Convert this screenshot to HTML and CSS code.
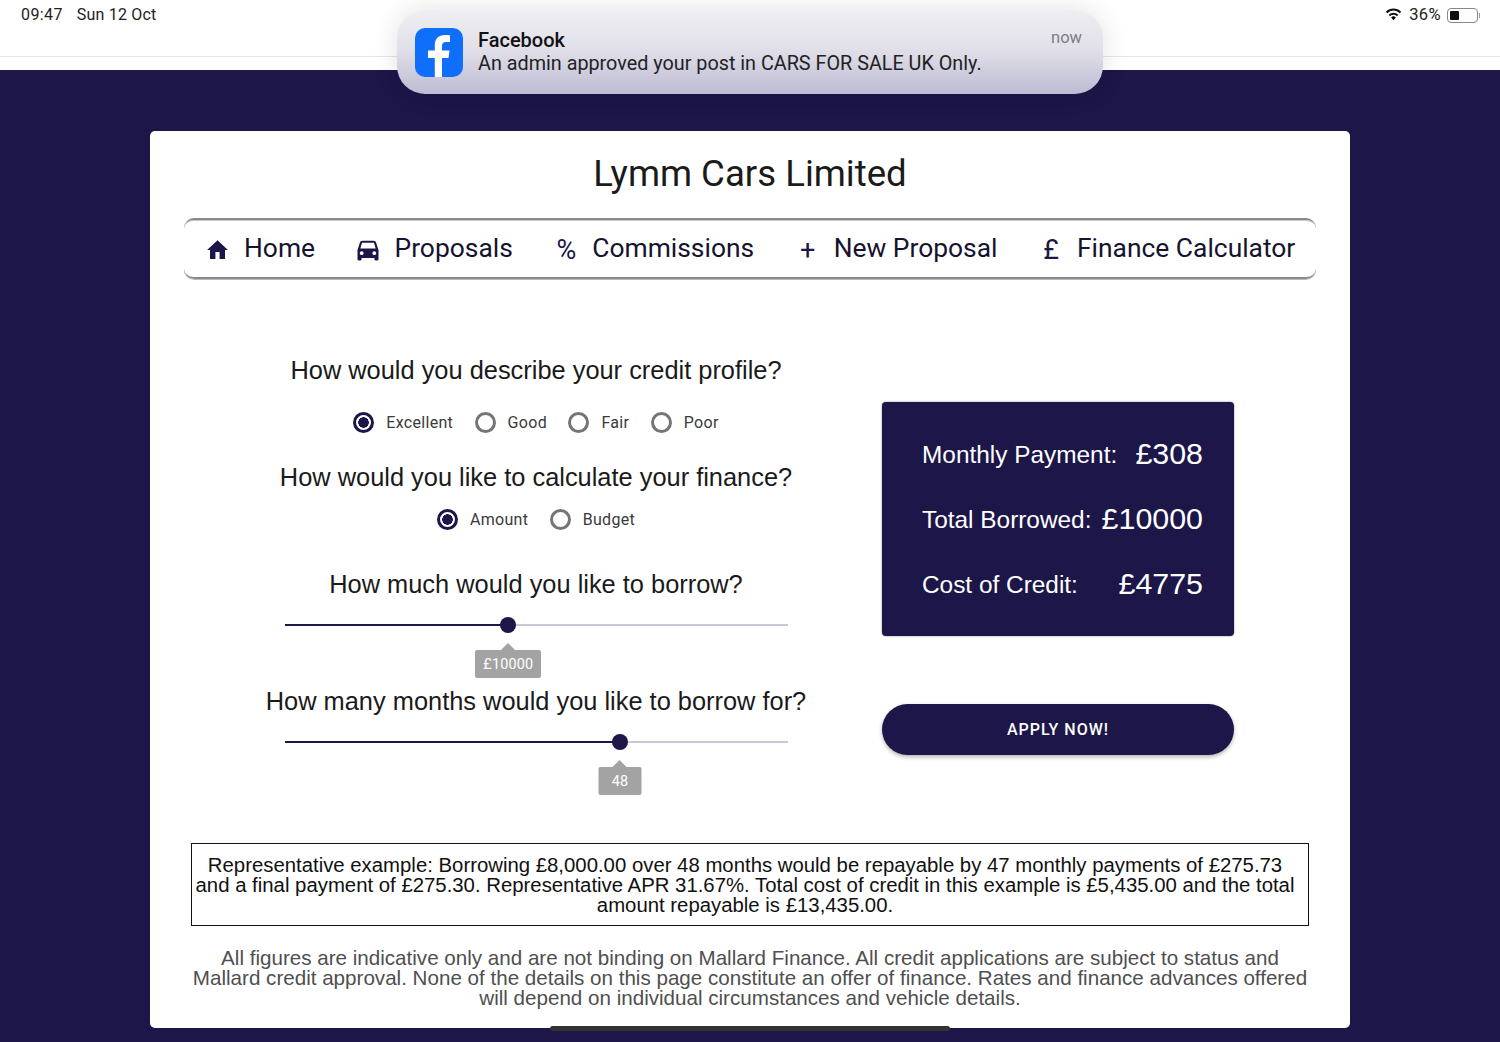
FILE: index.html
```html
<!DOCTYPE html>
<html lang="en">
<head>
    <meta charset="UTF-8">
    <meta name="viewport" content="width=device-width, initial-scale=1.0">
    <title>Finance Calculator</title>
    <link rel="stylesheet" href="styles.css">
</head>
<body>
    <!-- Tablet status bar -->
    <div class="status-bar">
        <div class="status-time">09:47<span class="status-date">Sun 12 Oct</span></div>
        <div class="status-right">
            <svg class="wifi-icon" viewBox="0 0 18 14" width="17" height="13">
                <path class="wifi-arc" d="M1.500 4.800A10.600 10.600 0 0 1 16.500 4.800"/>
                <path class="wifi-arc" d="M4.600 8A6.200 6.200 0 0 1 13.400 8"/>
                <path d="M6.500 10.300L9 13.200l2.500-2.900a3.400 3.400 0 0 0-5 0z"/>
            </svg>
            <span class="status-battery-text">36%</span>
            <div class="battery"><div class="battery-level"></div></div>
            <div class="battery-tip"></div>
        </div>
    </div>

    <!-- Notification banner -->
    <div class="notification">
        <svg class="fb-icon" viewBox="0 0 48 49" width="48" height="49">
            <rect width="48" height="49" rx="10" fill="#0f6ffa"/>
            <path d="M27 49V30h6.500l1-7.500H27v-4.700c0-2.200 1-3.800 4-3.800h4V7.300c-1.500-.2-3.300-.4-5.200-.4-5.800 0-10 3.500-10 10v5.600H13V30h6.800v19z" fill="#fff"/>
        </svg>
        <div class="notification-text">
            <div class="notification-title">Facebook</div>
            <div class="notification-body">An admin approved your post in CARS FOR SALE UK Only.</div>
        </div>
        <div class="notification-time">now</div>
    </div>

    <div class="card">
        <h1>Lymm Cars Limited</h1>

        <nav class="main-nav">
            <a class="nav-item">
                <svg class="nav-icon nav-icon-home" viewBox="0 0 24 24" width="25" height="25"><path d="M10 21v-6.500h4V21h5.200v-8.500H22L12 3 2 12.500h2.800V21z"/></svg>
                Home
            </a>
            <a class="nav-item">
                <svg class="nav-icon nav-icon-car" viewBox="0 0 24 24" width="28" height="28"><path d="M18.900 5.500c-.3-.9-1-1.500-2-1.500H7.100c-1 0-1.700.6-2 1.500L3 12v8c0 .6.400 1 1 1h1.500c.6 0 1-.4 1-1v-1.200h11V20c0 .6.400 1 1 1H20c.6 0 1-.4 1-1v-8zM6.600 16.300c-.9 0-1.600-.7-1.600-1.600s.7-1.600 1.600-1.600 1.600.7 1.600 1.600-.7 1.600-1.600 1.600zm10.800 0c-.9 0-1.600-.7-1.600-1.600s.7-1.600 1.600-1.600 1.600.7 1.600 1.600-.7 1.600-1.600 1.600zM5.400 10.800l1.500-5h10.200l1.500 5z"/></svg>
                Proposals
            </a>
            <a class="nav-item"><span class="nav-glyph">%</span>Commissions</a>
            <a class="nav-item"><span class="nav-glyph">+</span>New Proposal</a>
            <a class="nav-item"><span class="nav-glyph">£</span>Finance Calculator</a>
        </nav>

        <div class="calculator">
            <div class="questions">
                <div class="question">How would you describe your credit profile?</div>
                <div class="radio-row radio-row-first">
                    <label><input type="radio" name="credit" checked>Excellent</label>
                    <label><input type="radio" name="credit">Good</label>
                    <label><input type="radio" name="credit">Fair</label>
                    <label><input type="radio" name="credit">Poor</label>
                </div>

                <div class="question question-second">How would you like to calculate your finance?</div>
                <div class="radio-row radio-row-second">
                    <label><input type="radio" name="mode" checked>Amount</label>
                    <label><input type="radio" name="mode">Budget</label>
                </div>

                <div class="question question-third">How much would you like to borrow?</div>
                <div class="slider">
                    <div class="slider-fill" style="width: 44.4%">
                        <div class="slider-thumb"></div>
                        <div class="slider-tip">£10000</div>
                    </div>
                </div>

                <div class="question question-fourth">How many months would you like to borrow for?</div>
                <div class="slider">
                    <div class="slider-fill" style="width: 66.6%">
                        <div class="slider-thumb"></div>
                        <div class="slider-tip">48</div>
                    </div>
                </div>
            </div>

            <div class="summary">
                <div class="summary-panel">
                    <div class="summary-row"><span>Monthly Payment:</span><span class="summary-value">£308</span></div>
                    <div class="summary-row"><span>Total Borrowed:</span><span class="summary-value">£10000</span></div>
                    <div class="summary-row"><span>Cost of Credit:</span><span class="summary-value">£4775</span></div>
                </div>
                <button class="apply-button" type="button">Apply Now!</button>
            </div>
        </div>

        <div class="example-box">Representative example: Borrowing £8,000.00 over 48 months would be repayable by 47 monthly payments of £275.73 and a final payment of £275.30. Representative APR 31.67%. Total cost of credit in this example is £5,435.00 and the total amount repayable is £13,435.00.</div>

        <p class="disclaimer">All figures are indicative only and are not binding on Mallard Finance. All credit applications are subject to status and Mallard credit approval. None of the details on this page constitute an offer of finance. Rates and finance advances offered will depend on individual circumstances and vehicle details.</p>
    </div>

    <div class="home-bar"></div>
</body>
</html>
```

FILE: styles.css
```css
/* Reset some default browser styles */
* {
    margin: 0;
    padding: 0;
    box-sizing: border-box;
}

body {
    height: 1042px;
    overflow: hidden;
    background-color: #1c1649;
    font-family: 'Liberation Sans', Arial, sans-serif;
    color: #111;
}

/* Status bar */
.status-bar {
    display: flex;
    justify-content: space-between;
    height: 70px;
    padding: 6px 20px 0 21px;
    background: linear-gradient(#fff 56px, #e6e6e6 56px, #e6e6e6 57px, #fff 57px);
    font-family: 'Roboto', sans-serif;
    font-size: 16px;
    line-height: 18px;
    letter-spacing: 0.4px;
    color: #222;
}

.status-date {
    margin-left: 14px;
    letter-spacing: 0.2px;
}

.status-right {
    display: flex;
    align-items: flex-start;
}

.status-battery-text {
    font-size: 16.500px;
}

.wifi-icon {
    margin: 2px 7px 0 0;
}

.wifi-arc {
    fill: none;
    stroke: #111;
    stroke-width: 2.200;
}

.battery {
    width: 31px;
    height: 15px;
    margin: 2px 0 0 6px;
    padding: 2px;
    border: 1px solid #888;
    border-radius: 4px;
}

.battery-level {
    width: 9px;
    height: 9px;
    border-radius: 1px;
    background-color: #111;
}

.battery-tip {
    width: 1px;
    height: 5px;
    margin: 7px 0 0 1px;
    background-color: #999;
}

/* Notification banner */
.notification {
    position: absolute;
    top: 10px;
    left: 397px;
    display: flex;
    align-items: flex-start;
    width: 706px;
    height: 84px;
    padding: 18px 21px 0 18px;
    border-radius: 28px;
    background: linear-gradient(#efeef2, #e2e1ea 45%, #bdbbd3);
    box-shadow: 0 0 26px rgba(0, 0, 0, 0.12);
    font-family: 'Roboto', sans-serif;
}

.fb-icon {
    flex-shrink: 0;
}

.notification-text {
    flex: 1;
    margin-left: 15px;
    padding-top: 1px;
    font-size: 20px;
    line-height: 23px;
    color: #222;
}

.notification-title {
    font-weight: 500;
    color: #111;
}

.notification-body {
    font-size: 19.800px;
}

.notification-time {
    font-size: 16.500px;
    line-height: 20px;
    color: #7d7c85;
}

/* White card */
.card {
    width: 1200px;
    height: 897px;
    margin: 61px auto 0;
    padding-top: 21px;
    border-radius: 5px;
    background-color: #fff;
}

h1 {
    font-family: 'Roboto', sans-serif;
    font-size: 36.600px;
    font-weight: 400;
    line-height: 44px;
    text-align: center;
    color: #1a1a1a;
}

/* Main navigation */
.main-nav {
    display: flex;
    align-items: center;
    gap: 43.500px;
    height: 61px;
    margin: 22px 34px 1px;
    padding: 0 0 1px 21px;
    border-top: 2px solid #8a8a8a;
    border-bottom: 2px solid #8a8a8a;
    border-radius: 10px;
    box-shadow: inset 0 1px 0 #c8c8c8, 0 1px 0 #bbb;
    font-family: 'Roboto', sans-serif;
    font-size: 26.400px;
    color: #15132e;
}

.nav-item {
    display: flex;
    align-items: center;
    white-space: nowrap;
}

.nav-icon {
    fill: #1c1649;
}

.nav-icon-home {
    margin: 3px 14px 0 0;
}

.nav-icon-car {
    margin: 3px 12.500px 0 -4.500px;
}

.nav-glyph {
    width: 20px;
    margin: 3px 16px 0 0;
    font-size: 27px;
    text-align: center;
    color: #1c1649;
}

/* Calculator columns */
.calculator {
    display: flex;
    padding-top: 75px;
}

.questions {
    width: 600px;
    margin-left: 86px;
}

.question {
    font-size: 25.400px;
    line-height: 30px;
    text-align: center;
    white-space: nowrap;
    color: #1a1a1a;
}

.question-second {
    margin-top: 25px;
}

.question-third {
    margin-top: 35px;
}

.question-fourth {
    margin-top: 60px;
}

.radio-row {
    display: flex;
    justify-content: center;
    gap: 21.500px;
    height: 30px;
    font-family: 'Roboto', sans-serif;
    font-size: 16px;
    letter-spacing: 0.3px;
    color: #3a3a3a;
}

.radio-row-first {
    margin-top: 22px;
}

.radio-row-second {
    margin-top: 12px;
}

.radio-row label {
    display: flex;
    align-items: center;
    gap: 12px;
}

.radio-row input {
    appearance: none;
    width: 21px;
    height: 21px;
    border: 3px solid #757575;
    border-radius: 50%;
}

.radio-row input:checked {
    border-color: #1c1649;
    background: radial-gradient(circle, #1c1649 5px, transparent 5.500px);
}

/* Range sliders */
.slider {
    height: 2px;
    margin: 25px 48px 0 49px;
    background-color: #c9c7d8;
}

.slider-fill {
    position: relative;
    height: 2px;
    background-color: #1c1649;
}

.slider-thumb {
    position: absolute;
    top: -7px;
    right: -8px;
    width: 16px;
    height: 16px;
    border-radius: 50%;
    background-color: #1c1649;
}

.slider-tip {
    position: absolute;
    top: 26px;
    right: 0;
    height: 28px;
    min-width: 43px;
    padding: 0 8px;
    transform: translateX(50%);
    border-radius: 2px;
    background-color: #a3a3a3;
    font-family: 'Roboto', sans-serif;
    font-size: 14.400px;
    line-height: 30px;
    letter-spacing: 0.2px;
    text-align: center;
    color: #fff;
}

.slider-tip::before {
    content: "";
    position: absolute;
    top: -7px;
    left: 50%;
    margin-left: -7px;
    border-right: 7px solid transparent;
    border-bottom: 7px solid #a3a3a3;
    border-left: 7px solid transparent;
}

/* Summary panel */
.summary {
    width: 352px;
    margin-left: 46px;
    padding-top: 47px;
}

.summary-panel {
    display: flex;
    flex-direction: column;
    justify-content: center;
    height: 234px;
    padding: 2px 31px 0 40px;
    border-radius: 4px;
    background-color: #1c1649;
    box-shadow: 0 0 2px rgba(0, 0, 0, 0.5);
    color: #fff;
}

.summary-row {
    display: flex;
    align-items: center;
    justify-content: space-between;
    height: 65px;
    font-size: 24.400px;
    white-space: nowrap;
}

.summary-value {
    margin-bottom: 4px;
    font-size: 30.400px;
}

.apply-button {
    display: block;
    width: 100%;
    height: 51px;
    margin-top: 68px;
    border: none;
    border-radius: 26px;
    background-color: #1c1649;
    box-shadow: 0 2px 4px rgba(0, 0, 0, 0.3);
    font-family: 'Roboto', sans-serif;
    font-size: 16px;
    font-weight: 500;
    letter-spacing: 1px;
    text-transform: uppercase;
    color: #fff;
}

/* Small print */
.example-box {
    height: 83px;
    margin: 88px 41px 0;
    padding: 11px 10px 0 0;
    border: 1px solid #111;
    font-size: 20.350px;
    line-height: 20.200px;
    text-align: center;
}

.disclaimer {
    margin: 22px 41px 0;
    font-size: 20.600px;
    line-height: 20.200px;
    text-align: center;
    color: #4f4f4f;
}

.home-bar {
    position: absolute;
    top: 1026px;
    left: 550px;
    width: 400px;
    height: 5px;
    border-radius: 3px;
    background-color: #333;
}
```
